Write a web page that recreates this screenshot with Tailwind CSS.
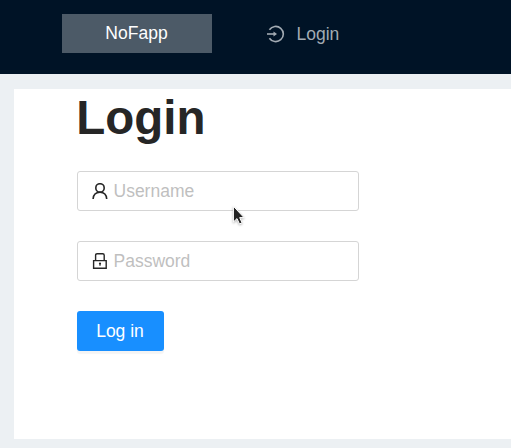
<!DOCTYPE html>
<html lang="en">
<head>
<meta charset="utf-8">
<title>NoFapp</title>
<script src="https://cdn.jsdelivr.net/npm/@tailwindcss/browser@4"></script>
</head>
<body class="relative flex h-[448px] w-[511px] flex-col overflow-hidden bg-[#ecf0f3] font-['Liberation_Sans',Arial,sans-serif] text-[17.5px]">
  <header class="flex h-[74px] shrink-0 items-start bg-[#001326] pl-[62px] pt-[14px]">
    <a class="flex h-[39px] w-[150px] items-center justify-center bg-[#4c5a67] pr-px text-white">NoFapp</a>
    <nav class="ml-[55px] flex h-[40px] items-center text-[#a3abb3]">
      <svg class="h-[18px] w-[18px]" viewBox="0 0 18 18" fill="none" stroke="currentColor" stroke-width="1.6">
        <path d="M2.4 4.8A7.6 7.6 0 1 1 2.4 13.2"/>
        <path d="M0 9H7.5"/>
        <path d="M6.5 6.4L10 9L6.5 11.6Z" fill="currentColor" stroke="none"/>
      </svg>
      <span class="ml-[11.5px]">Login</span>
    </nav>
  </header>
  <main class="ml-[14px] mt-[15px] h-[350px] bg-white pl-[63px]">
    <h1 class="-ml-[0.7px] h-[82px] pt-px text-[47.5px] leading-[56px] font-bold text-[#262626]">Login</h1>
    <form class="flex flex-col items-start gap-[30px]">
      <label class="flex h-[40px] w-[282px] items-center rounded-[3px] border border-[#d5d5d5] pl-[14px] text-[#bfbfbf]">
        <svg class="mr-[5.5px] h-[16px] w-[16px] text-[#262626]" viewBox="0 0 16 16" fill="none" stroke="currentColor" stroke-width="1.6">
          <circle cx="8" cy="4.9" r="4.2"/>
          <path d="M1.1 16C1.3 11.8 4 9.2 8 9.2S14.5 11.8 14.7 16"/>
        </svg>
        <span>Username</span>
      </label>
      <label class="flex h-[40px] w-[282px] items-center rounded-[3px] border border-[#d5d5d5] pl-[14px] text-[#bfbfbf]">
        <svg class="mr-[5.5px] h-[16px] w-[16px] text-[#262626]" viewBox="0 0 16 16" fill="none" stroke="currentColor" stroke-width="1.4">
          <path d="M1.6 7.6H14.2V15.2H1.6Z"/>
          <path d="M3.6 7.5V2.2Q3.6 0.7 5.1 0.7H10.7Q12.2 0.7 12.2 2.2V7.5"/>
          <path d="M8 10.4V12.9" stroke-width="1"/>
          <circle cx="8" cy="10.6" r="1.1" fill="currentColor" stroke="none"/>
        </svg>
        <span>Password</span>
      </label>
      <button type="button" class="h-[40px] w-[87px] rounded-[3px] bg-[#188fff] pr-px text-white shadow-[0_3px_1px_rgba(0,0,0,0.045)]">Log in</button>
    </form>
  </main>
  <svg class="absolute left-[231px] top-[203px] h-[25px] w-[16px] drop-shadow-[0_1px_1px_rgba(0,0,0,0.3)]" viewBox="0 0 16 25">
    <path d="M2.4 3.2V19L6 15.6L8.5 21L11 19.8L8.7 14.6H13Z" fill="#222" stroke="#fff" stroke-width="1"/>
  </svg>
</body>
</html>
